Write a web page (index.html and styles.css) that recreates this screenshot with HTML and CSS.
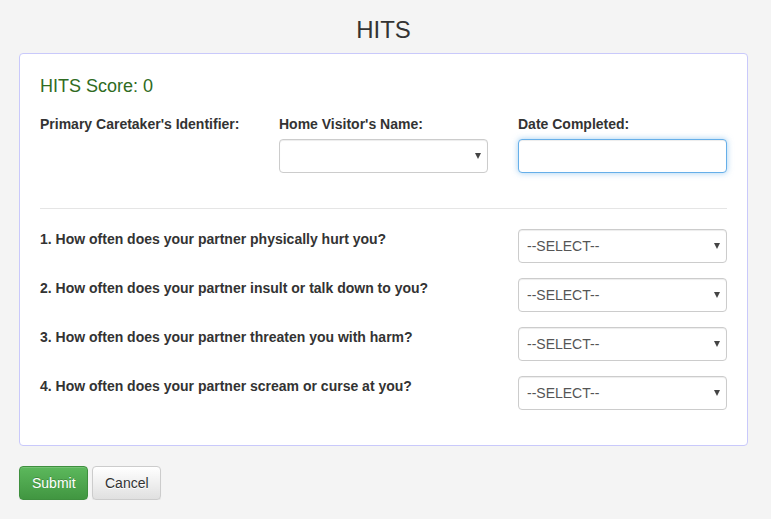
FILE: index.html
```html
<!DOCTYPE html>
<html>
<head>
<meta charset="utf-8">
<link rel="stylesheet" href="styles.css">
</head>
<body>
<div class="page">
  <h1 class="title">HITS</h1>
  <div class="panel">
    <div class="score">HITS Score: 0</div>
    <div class="grid3">
      <div class="field">
        <label>Primary Caretaker's Identifier:</label>
      </div>
      <div class="field">
        <label>Home Visitor's Name:</label>
        <div class="select-wrap">
          <select class="control"><option></option></select>
          <span class="arrow"></span>
        </div>
      </div>
      <div class="field">
        <label>Date Completed:</label>
        <input class="control focus" type="text">
      </div>
    </div>
    <hr class="divider">
    <div class="question">
      <div class="q-label">1. How often does your partner physically hurt you?</div>
      <div class="select-wrap"><select class="control"><option>--SELECT--</option></select><span class="arrow"></span></div>
    </div>
    <div class="question">
      <div class="q-label">2. How often does your partner insult or talk down to you?</div>
      <div class="select-wrap"><select class="control"><option>--SELECT--</option></select><span class="arrow"></span></div>
    </div>
    <div class="question">
      <div class="q-label">3. How often does your partner threaten you with harm?</div>
      <div class="select-wrap"><select class="control"><option>--SELECT--</option></select><span class="arrow"></span></div>
    </div>
    <div class="question">
      <div class="q-label">4. How often does your partner scream or curse at you?</div>
      <div class="select-wrap"><select class="control"><option>--SELECT--</option></select><span class="arrow"></span></div>
    </div>
  </div>
  <div class="buttons">
    <button class="btn btn-success">Submit</button>
    <button class="btn btn-default">Cancel</button>
  </div>
</div>
</body>
</html>
```
FILE: styles.css
```css
* { box-sizing: border-box; }
html, body {
  margin: 0;
  padding: 0;
  background: #f4f4f4;
  font-family: "Liberation Sans", Arial, sans-serif;
  font-size: 14px;
  color: #333;
}
.page {
  width: 729px;
  margin-left: 19px;
  padding-top: 17px;
}
.title {
  margin: 0 0 10px;
  font-size: 24px;
  font-weight: normal;
  line-height: 26px;
  text-align: center;
  color: #333;
}
.panel {
  background: #fff;
  border: 1px solid #c9c9fb;
  border-radius: 4px;
  padding: 22px 20px 20px 20px;
}
.score {
  font-size: 18px;
  line-height: 20px;
  color: #2f6b22;
  margin-bottom: 18px;
}
.grid3 {
  display: flex;
  gap: 30px;
}
.field {
  width: 209px;
  display: flex;
  flex-direction: column;
}
.field label, .q-label {
  font-weight: bold;
  font-size: 14px;
  line-height: 20px;
  color: #333;
}
.field label { margin-bottom: 5px; }
.control {
  display: block;
  width: 209px;
  height: 34px;
  border: 1px solid #ccc;
  border-radius: 4px;
  background: #fff;
  font-family: "Liberation Sans", Arial, sans-serif;
  font-size: 14px;
  color: #555;
  padding: 6px 20px 6px 8px;
  box-shadow: inset 0 1px 1px rgba(0,0,0,0.075);
  -webkit-appearance: none;
  appearance: none;
  outline: none;
}
.control.focus {
  border-color: #66afe9;
  box-shadow: inset 0 1px 1px rgba(0,0,0,0.075), 0 0 6px rgba(102,175,233,0.6);
}
.select-wrap {
  position: relative;
  width: 209px;
  height: 34px;
}
.arrow {
  position: absolute;
  right: 7px;
  top: 14px;
  width: 0;
  height: 0;
  border-left: 3px solid transparent;
  border-right: 3px solid transparent;
  border-top: 6px solid #444;
  pointer-events: none;
}
.divider {
  border: 0;
  border-top: 1px solid #e5e5e5;
  margin: 35px 0 20px;
}
.question {
  display: flex;
  gap: 30px;
  margin-bottom: 15px;
}
.q-label {
  width: 448px;
}
.buttons {
  margin-top: 20px;
  display: flex;
  gap: 4px;
}
.btn {
  height: 34px;
  border-radius: 4px;
  font-family: "Liberation Sans", Arial, sans-serif;
  font-size: 14px;
  padding: 6px 12px;
  cursor: pointer;
}
.btn-success {
  width: 69px;
  color: #fff;
  border: 1px solid #3e8f3e;
  background: linear-gradient(to bottom, #5cb85c 0%, #419641 100%);
  text-shadow: 0 -1px 0 rgba(0,0,0,0.2);
  box-shadow: inset 0 1px 0 rgba(255,255,255,0.15), 0 1px 1px rgba(0,0,0,0.075);
}
.btn-default {
  width: 69px;
  color: #333;
  border: 1px solid #ccc;
  background: linear-gradient(to bottom, #fff 0%, #e0e0e0 100%);
  text-shadow: 0 1px 0 #fff;
  box-shadow: inset 0 1px 0 rgba(255,255,255,0.15), 0 1px 1px rgba(0,0,0,0.075);
}
```
